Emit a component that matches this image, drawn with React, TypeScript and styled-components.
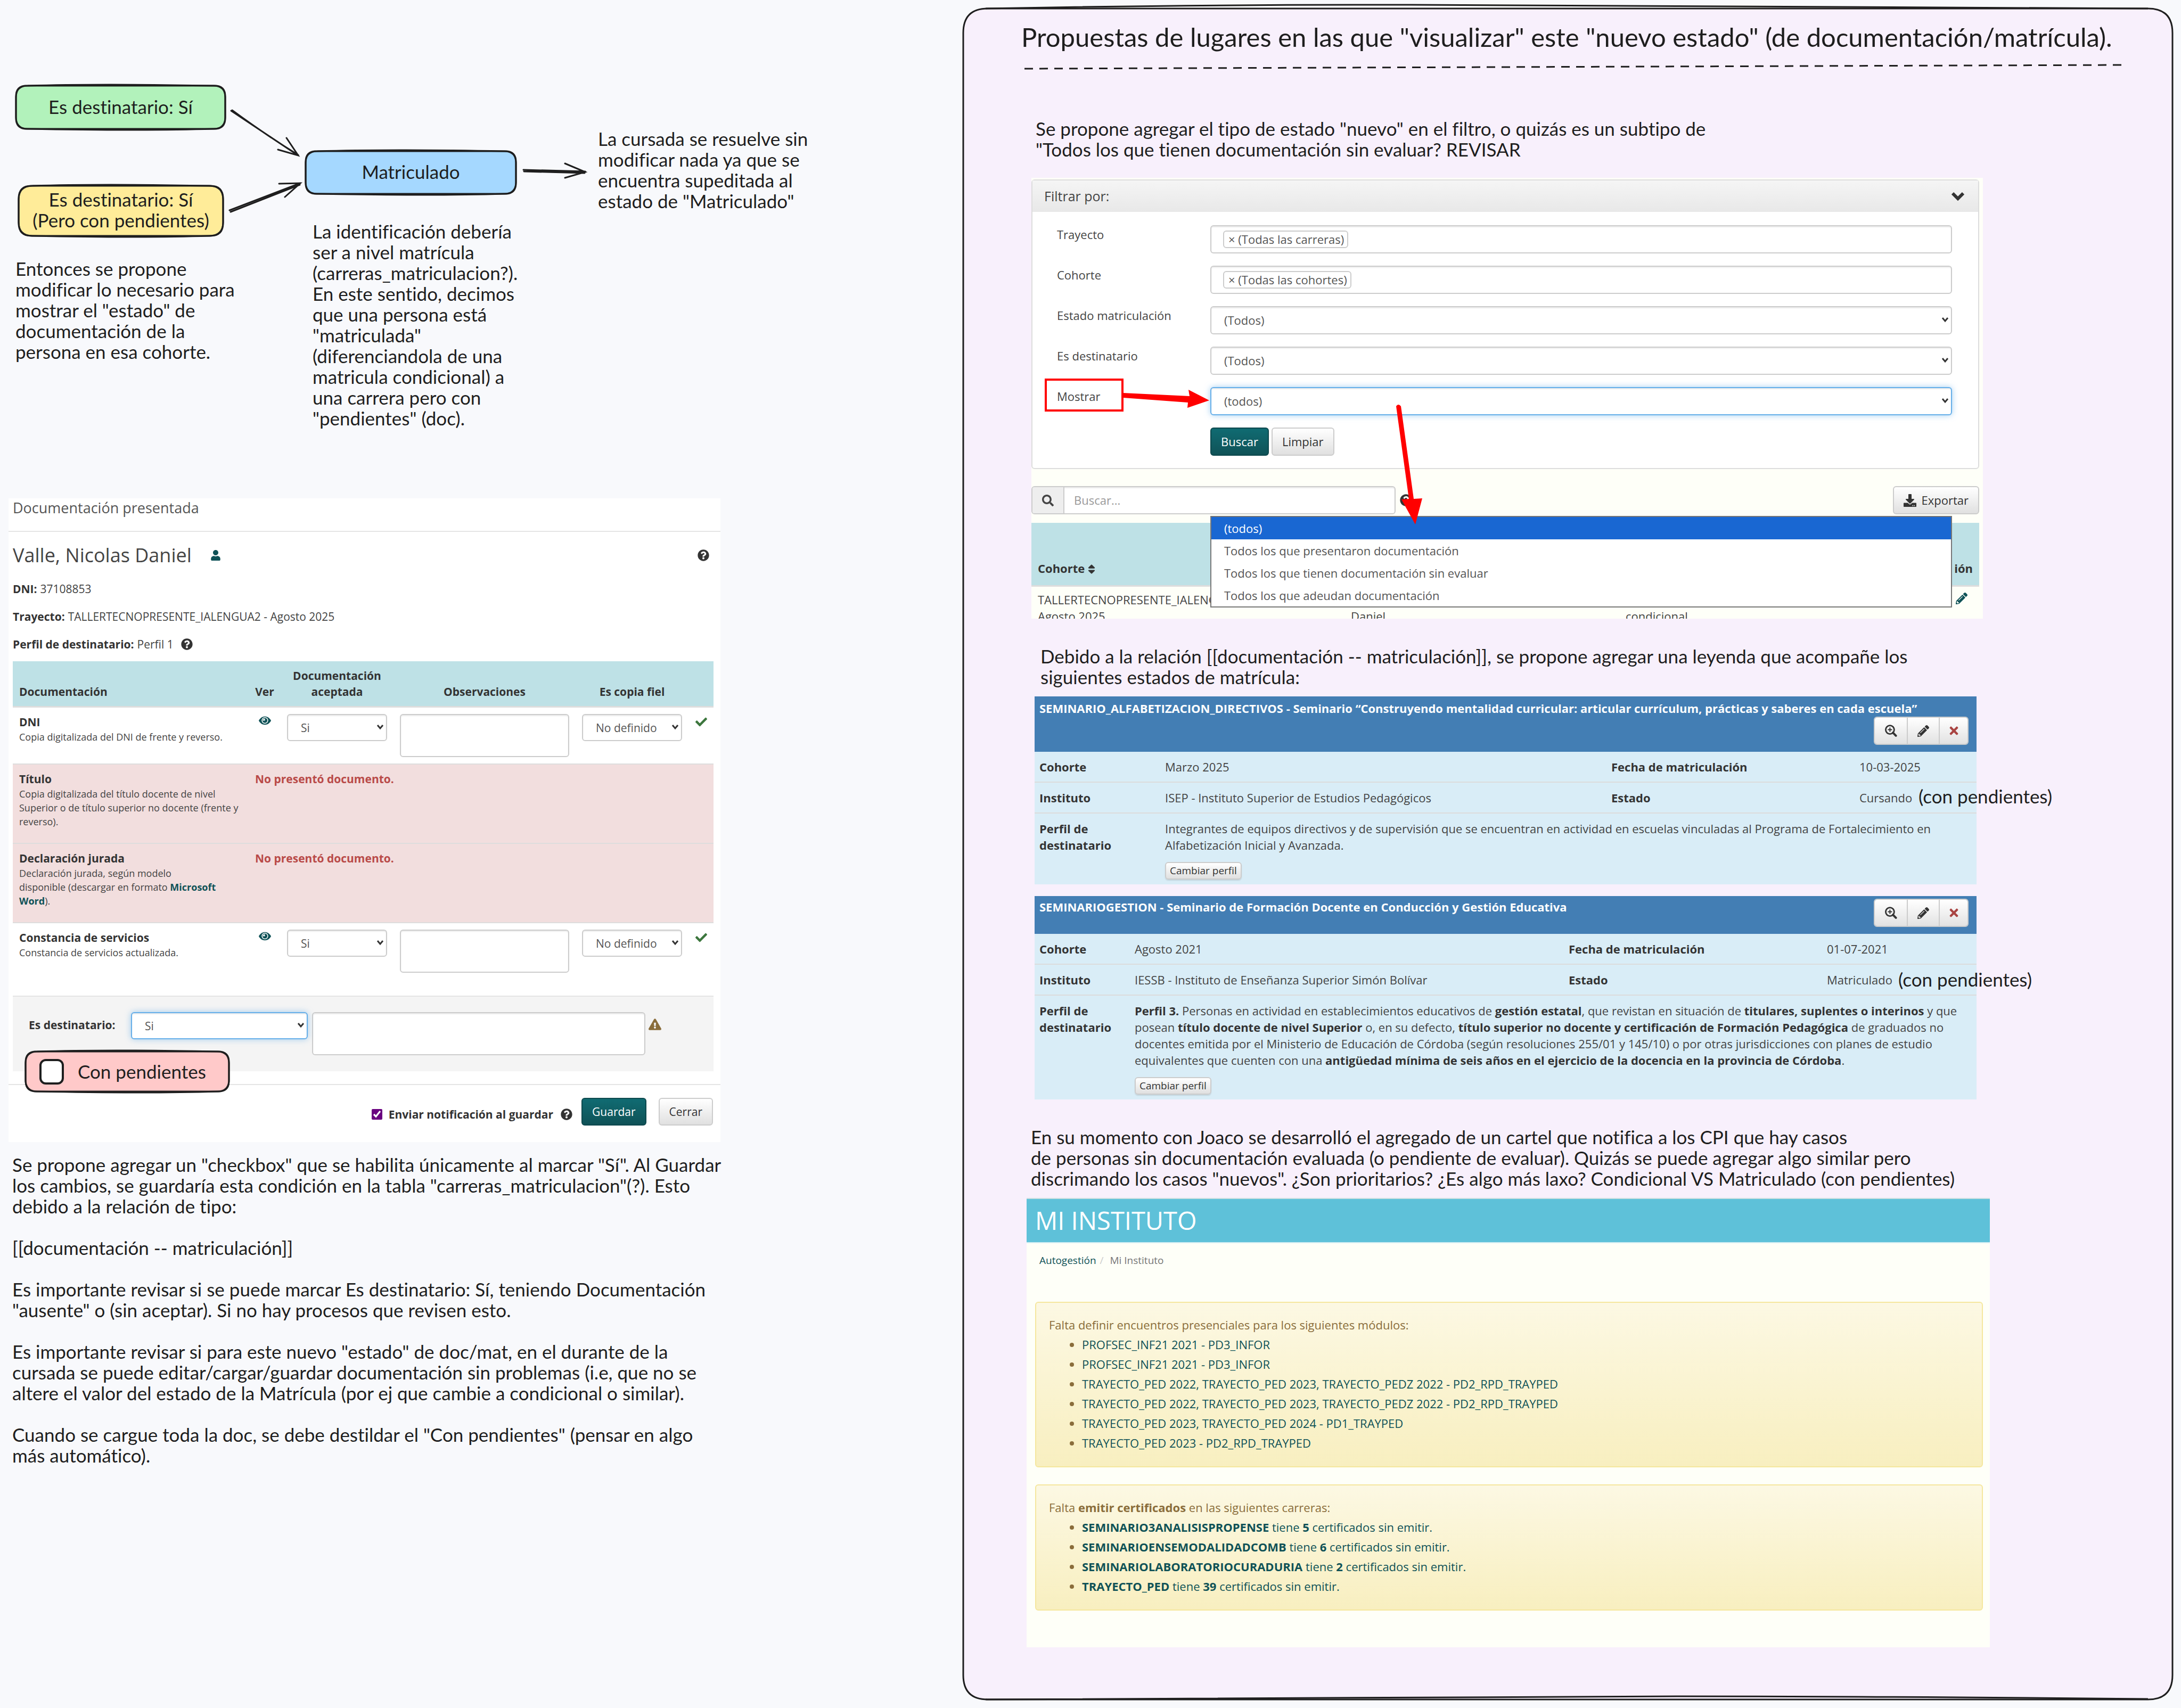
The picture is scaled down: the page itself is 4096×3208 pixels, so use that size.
import React from "react";
import styled, { createGlobalStyle, css } from "styled-components";
import {
  FaCheck,
  FaChevronDown,
  FaDownload,
  FaExclamationTriangle,
  FaPencilAlt,
  FaQuestionCircle,
  FaSearch,
  FaSort,
  FaTimes,
  FaUser,
} from "react-icons/fa";

const ink = "#1e1e1e";
const teal = "#0f5257";
const sans = '"Open Sans", "Noto Sans", sans-serif';
const hand = 'Excalifont, Lato, sans-serif';

const GlobalStyle = createGlobalStyle`
  *, *::before, *::after { box-sizing: border-box; }
  body { margin: 0; background: #f8f9fc; }
  #root { min-height: 100vh; }
  p, h1, h2, h3, ul { margin: 0; padding: 0; font-weight: inherit; font-size: inherit; }
  input, select, textarea, button { font: inherit; color: inherit; margin: 0; }
`;

/* ---------- canvas ---------- */

const Canvas = styled.main`
  position: relative;
  width: 100%;
  min-height: 100vh;
  overflow: hidden;
  font-family: ${sans};
  color: #333;
`;

const Pinned = styled.div<{ $x: number; $y: number; $w?: number }>`
  position: absolute;
  left: ${(p) => p.$x}px;
  top: ${(p) => p.$y}px;
  ${(p) => p.$w && css`width: ${p.$w}px;`}
`;

const Ink = styled.svg`
  position: absolute;
  left: 0;
  top: 0;
  width: 4096px;
  height: 3208px;
  pointer-events: none;
`;

const handwriting = css`
  font-family: ${hand};
  font-size: 35px;
  line-height: 39px;
  font-variant-ligatures: none;
  white-space: pre;
  color: ${ink};
`;

const Note = styled(Pinned).attrs({ as: "p" })`
  ${handwriting}
`;

const BoardTitle = styled(Note).attrs({ as: "h1" })`
  font-size: 49px;
  line-height: 56px;
`;

const NodeLabel = styled(Pinned)<{ $h: number }>`
  display: flex;
  align-items: center;
  justify-content: center;
  height: ${(p) => p.$h}px;
  text-align: center;
  ${handwriting}
`;

const PendingLabel = styled(NodeLabel).attrs({ as: "label" })`
  justify-content: flex-start;
  gap: 26px;
  padding-left: 26px;
`;

const SketchCheck = styled.input`
  appearance: none;
  width: 46px;
  height: 48px;
  border: 4px solid ${ink};
  border-radius: 12px;
  background: #fff;
`;

/* ---------- icons ---------- */

const EyeIcon = () => (
  <svg width="25" height="17" viewBox="0 0 32 22">
    <path d="M1 11C5 4 10 1 16 1s11 3 15 10c-4 7-9 10-15 10S5 18 1 11Z" fill={teal} />
    <circle cx="16" cy="10.500" r="7" fill="none" stroke="#fff" strokeWidth="2" />
    <path d="M16 6v5h-5A5 5 0 0 1 16 6Z" fill="#fff" />
  </svg>
);

const ZoomIcon = () => (
  <svg width="24" height="24" viewBox="0 0 30 30" fill="none" stroke="#333">
    <circle cx="13" cy="12" r="10" strokeWidth="3.500" />
    <path d="M13 7v10M8 12h10" strokeWidth="2.500" />
    <path d="M20 19l7 7" strokeWidth="5" strokeLinecap="round" />
  </svg>
);

/* ---------- shared controls ---------- */

const field = css`
  border: 2px solid #ccc;
  border-radius: 6px;
  background: #fff;
  color: #555;
  box-shadow: inset 0 2px 2px rgba(0, 0, 0, 0.08);
`;

const focused = css`
  border-color: #66afe9;
  box-shadow: inset 0 2px 2px rgba(0, 0, 0, 0.08), 0 0 12px rgba(102, 175, 233, 0.6);
`;

const SelectWrap = styled.span<{ $w?: number; $h: number }>`
  position: relative;
  display: block;
  width: ${(p) => (p.$w ? p.$w + "px" : "100%")};
  height: ${(p) => p.$h}px;
  svg {
    position: absolute;
    right: 6px;
    top: calc(50% - 7px);
    pointer-events: none;
  }
`;

const NativeSelect = styled.select<{ $focus?: boolean }>`
  appearance: none;
  display: block;
  width: 100%;
  height: 100%;
  padding: 0 22px 0 24px;
  ${field}
  ${(p) => p.$focus && focused}
`;

type SelectProps = { value: string; w?: number; h: number; focus?: boolean; id?: string; label?: string };

const Select = ({ value, w, h, focus, id, label }: SelectProps) => (
  <SelectWrap $w={w} $h={h}>
    <NativeSelect id={id} aria-label={label} $focus={focus} defaultValue={value}>
      <option>{value}</option>
    </NativeSelect>
    <svg width="14" height="12" viewBox="0 0 14 12" fill="none" stroke="#333" strokeWidth="3">
      <path d="M2 2l5 6 5-6" />
    </svg>
  </SelectWrap>
);

const TextArea = styled.textarea<{ $w?: number }>`
  display: block;
  width: ${(p) => (p.$w ? p.$w + "px" : "100%")};
  height: 81px;
  resize: none;
  ${field}
`;

const Button = styled.button<{ $primary?: boolean; $h: number }>`
  display: inline-flex;
  align-items: center;
  gap: 10px;
  height: ${(p) => p.$h}px;
  padding: 0 18px;
  border: 2px solid #ccc;
  border-radius: 6px;
  background: linear-gradient(#fff, #e0e0e0);
  color: #333;
  ${(p) =>
    p.$primary &&
    css`
      border-color: #0d484d;
      background: linear-gradient(#106b72, #0f5257);
      color: #fff;
    `}
`;

const SmallButton = styled(Button)`
  padding: 0 7px;
  font-size: 19px;
  box-shadow: 0 2px 2px rgba(0, 0, 0, 0.1);
`;

/* ---------- documentation dialog ---------- */

const Dialog = styled(Pinned).attrs({ as: "section" })`
  background: #fff;
  font-size: 21px;
  line-height: 30px;
`;

const DialogHead = styled.h2`
  height: 63px;
  padding-left: 8px;
  border-bottom: 2px solid #e5e5e5;
  font-size: 27px;
  line-height: 36px;
  color: #555;
`;

const DialogBody = styled.div`
  display: flex;
  flex-direction: column;
  gap: 22px;
  padding: 24px 13px 24px 8px;
`;

const NameRow = styled.div`
  display: flex;
  align-items: center;
  height: 46px;
  gap: 35px;
  padding: 0 8px 6px 0;
  font-size: 36px;
  color: #444;
  svg:last-child { margin-left: auto; }
`;

const Line = styled.p`
  display: flex;
  align-items: center;
  gap: 6px;
  color: #444;
  strong { color: #333; }
  svg { margin-left: 8px; }
`;

const DocTable = styled.table`
  width: 100%;
  margin-top: -5px;
  margin-bottom: 9px;
  border-collapse: separate;
  border-spacing: 0;
  table-layout: fixed;
  th, td { padding: 12px; }
  th {
    vertical-align: bottom;
    background: #bee1e6;
    border-bottom: 3px solid #ddd;
  }
  th:first-child { text-align: left; }
  td { vertical-align: top; }
  tr + tr td { border-top: 2px solid #ddd; }
`;

const MissingRow = styled.tr`
  background: #f2dede;
  td { height: 149px; }
  td:last-child { font-weight: 700; color: #b94a48; }
`;

const DocTitle = styled.strong`
  display: block;
`;

const DocText = styled.span`
  display: block;
  font-size: 18px;
  line-height: 26px;
  white-space: nowrap;
  color: #444;
`;

const Center = styled.span`
  display: flex;
  justify-content: center;
  padding-top: 4px;
`;

const Link = styled.a<{ $bold?: boolean }>`
  color: ${teal};
  text-decoration: none;
  ${(p) => p.$bold && css`font-weight: 700;`}
`;

const Well = styled.div`
  display: flex;
  height: 142px;
  padding: 29px 0 0 30px;
  border-top: 2px solid #e5e5e5;
  background: #f4f4f4;
  gap: 8px;
  > label { width: 184px; padding-top: 9px; font-weight: 700; }
  > svg { margin-top: 11px; margin-left: -2px; }
`;

const DialogFoot = styled.div`
  display: flex;
  align-items: center;
  justify-content: flex-end;
  height: 109px;
  padding: 0 14px 8px 0;
  border-top: 2px solid #e5e5e5;
  label { display: flex; align-items: center; gap: 12px; margin: 10px 14px 0 0; font-weight: 700; }
  label + svg { margin: 10px 17px 0 0; }
  button + button { margin-left: 23px; }
`;

const Tick = styled.input`
  width: 20px;
  height: 20px;
  accent-color: #6a0080;
`;

const DocRow = ({ title, text }: { title: string; text: string }) => (
  <tr>
    <td>
      <DocTitle>{title}</DocTitle>
      <DocText>{text}</DocText>
    </td>
    <td><Center><EyeIcon /></Center></td>
    <td><Select value="Si" h={51} label={`Documentación aceptada: ${title}`} /></td>
    <td><TextArea aria-label={`Observaciones: ${title}`} /></td>
    <td><Select value="No definido" h={51} label={`Es copia fiel: ${title}`} /></td>
    <td><Center><FaCheck size={22} color="#3c763d" /></Center></td>
  </tr>
);

const DocumentationDialog = () => (
  <Dialog $x={16} $y={936} $w={1337}>
    <DialogHead>Documentación presentada</DialogHead>
    <DialogBody>
      <NameRow>
        Valle, Nicolas Daniel
        <FaUser size={20} color={teal} />
        <FaQuestionCircle size={22} color="#333" />
      </NameRow>
      <Line><strong>DNI:</strong> 37108853</Line>
      <Line><strong>Trayecto:</strong> TALLERTECNOPRESENTE_IALENGUA2 - Agosto 2025</Line>
      <Line><strong>Perfil de destinatario:</strong> Perfil 1 <FaQuestionCircle size={22} color="#333" /></Line>
      <DocTable>
        <colgroup>
          <col />
          <col style={{ width: 60 }} />
          <col style={{ width: 212 }} />
          <col style={{ width: 342 }} />
          <col style={{ width: 212 }} />
          <col style={{ width: 47 }} />
        </colgroup>
        <thead>
          <tr>
            <th>Documentación</th>
            <th>Ver</th>
            <th>Documentación aceptada</th>
            <th>Observaciones</th>
            <th>Es copia fiel</th>
            <th />
          </tr>
        </thead>
        <tbody>
          <DocRow title="DNI" text="Copia digitalizada del DNI de frente y reverso." />
          <MissingRow>
            <td>
              <DocTitle>Título</DocTitle>
              <DocText>
                Copia digitalizada del título docente de nivel<br />
                Superior o de título superior no docente (frente y<br />
                reverso).
              </DocText>
            </td>
            <td colSpan={5}>No presentó documento.</td>
          </MissingRow>
          <MissingRow>
            <td>
              <DocTitle>Declaración jurada</DocTitle>
              <DocText>
                Declaración jurada, según modelo<br />
                disponible (descargar en formato <Link $bold href="#">Microsoft<br />
                Word</Link>).
              </DocText>
            </td>
            <td colSpan={5}>No presentó documento.</td>
          </MissingRow>
          <DocRow title="Constancia de servicios" text="Constancia de servicios actualizada." />
        </tbody>
      </DocTable>
      <Well>
        <label htmlFor="destinatario">Es destinatario:</label>
        <Select id="destinatario" value="Si" w={332} h={51} focus />
        <TextArea $w={626} aria-label="Observaciones de destinatario" />
        <FaExclamationTriangle size={24} color="#8a6d3b" />
      </Well>
    </DialogBody>
    <DialogFoot>
      <label><Tick type="checkbox" defaultChecked />Enviar notificación al guardar</label>
      <FaQuestionCircle size={22} color="#333" />
      <Button $primary $h={52}>Guardar</Button>
      <Button $h={52}>Cerrar</Button>
    </DialogFoot>
  </Dialog>
);

/* ---------- filter screen ---------- */

const FilterScreen = styled(Pinned).attrs({ as: "section" })`
  height: 828px;
  overflow: hidden;
  padding: 3px 7px 0 0;
  background: #fefff8;
  font-size: 22px;
  line-height: 31px;
  color: #444;
`;

const FilterCard = styled.div`
  border: 2px solid #ddd;
  border-radius: 6px;
  background: #fff;
  height: 544px;
`;

const FilterHead = styled.h2`
  display: flex;
  align-items: center;
  justify-content: space-between;
  height: 59px;
  padding: 0 26px 0 22px;
  background: linear-gradient(#f5f5f5, #e8e8e8);
  font-size: 25px;
`;

const FilterBody = styled.form`
  display: grid;
  grid-template-columns: 288px 1fr;
  row-gap: 23px;
  padding: 25px 49px 0 46px;
  > label { padding-top: 2px; }
`;

const TagBox = styled.div`
  display: flex;
  align-items: center;
  height: 53px;
  padding-left: 22px;
  ${field}
`;

const Tag = styled.span`
  height: 33px;
  padding: 0 6px 0 8px;
  border: 2px solid #ccc;
  border-radius: 6px;
  line-height: 29px;
  color: #555;
`;

const Actions = styled.div`
  display: flex;
  gap: 5px;
  grid-column: 2;
`;

const Toolbar = styled.div`
  display: flex;
  align-items: center;
  gap: 8px;
  padding: 32px 0 16px;
  button:last-child { margin-left: auto; }
`;

const SearchGroup = styled.label`
  display: flex;
  width: 684px;
  height: 53px;
  overflow: hidden;
  ${field}
  span {
    display: grid;
    place-items: center;
    width: 60px;
    border-right: 2px solid #ccc;
    background: #eee;
  }
  input { flex: 1; padding: 0 18px; border: 0; background: none; outline: 0; }
  input::placeholder { color: #999; opacity: 1; }
`;

const ResultTable = styled.table`
  width: 100%;
  border-spacing: 0;
  table-layout: fixed;
  th, td { padding: 9px 12px; text-align: left; vertical-align: top; white-space: nowrap; }
  th {
    height: 120px;
    padding-bottom: 16px;
    vertical-align: bottom;
    background: #bee1e6;
    border-bottom: 3px solid #ddd;
    color: #333;
  }
  th svg { margin-left: 2px; vertical-align: -4px; }
  th:last-child, td:last-child { text-align: right; }
  td:last-child { padding-right: 22px; }
`;

const OptionList = styled(Pinned).attrs({ as: "ul" })`
  border: 2px solid #777;
  background: #fff;
  list-style: none;
  font-size: 22px;
  line-height: 42px;
  color: #555;
  li { padding-left: 24px; }
  li:first-child { background: #1967d2; color: #fff; }
`;

const FilterView = () => (
  <>
    <FilterScreen $x={1937} $y={334} $w={1787}>
      <FilterCard>
        <FilterHead>
          Filtrar por:
          <svg width="24" height="18" viewBox="0 0 24 18" fill="none" stroke="#333" strokeWidth="6">
            <path d="M2 3l10 10L22 3" />
          </svg>
        </FilterHead>
        <FilterBody>
          <label>Trayecto</label>
          <TagBox><Tag>× (Todas las carreras)</Tag></TagBox>
          <label>Cohorte</label>
          <TagBox><Tag>× (Todas las cohortes)</Tag></TagBox>
          <label htmlFor="estado">Estado matriculación</label>
          <Select id="estado" value="(Todos)" h={53} />
          <label htmlFor="es-destinatario">Es destinatario</label>
          <Select id="es-destinatario" value="(Todos)" h={53} />
          <label htmlFor="mostrar">Mostrar</label>
          <Select id="mostrar" value="(todos)" h={53} focus />
          <Actions>
            <Button type="button" $primary $h={53}>Buscar</Button>
            <Button type="button" $h={53}>Limpiar</Button>
          </Actions>
        </FilterBody>
      </FilterCard>
      <Toolbar>
        <SearchGroup>
          <span><FaSearch size={22} color="#444" /></span>
          <input placeholder="Buscar..." aria-label="Buscar" />
        </SearchGroup>
        <FaQuestionCircle size={23} color="#333" />
        <Button $h={53}><FaDownload size={24} />Exportar</Button>
      </Toolbar>
      <ResultTable>
        <colgroup>
          <col style={{ width: 588 }} />
          <col style={{ width: 516 }} />
          <col />
          <col style={{ width: 120 }} />
        </colgroup>
        <thead>
          <tr><th>Cohorte<FaSort size={22} /></th><th /><th /><th>ión</th></tr>
        </thead>
        <tbody>
          <tr>
            <td>TALLERTECNOPRESENTE_IALENGUA2<br />Agosto 2025</td>
            <td><br />Daniel</td>
            <td><br />condicional</td>
            <td><FaPencilAlt size={22} color={teal} /></td>
          </tr>
        </tbody>
      </ResultTable>
    </FilterScreen>
    <OptionList $x={2273} $y={969} $w={1393}>
      <li>(todos)</li>
      <li>Todos los que presentaron documentación</li>
      <li>Todos los que tienen documentación sin evaluar</li>
      <li>Todos los que adeudan documentación</li>
    </OptionList>
  </>
);

/* ---------- enrolment cards ---------- */

const Enrolment = styled(Pinned).attrs({ as: "section" })`
  background: #d9edf7;
  font-size: 22px;
  line-height: 31px;
  color: #444;
`;

const EnrolHead = styled.header<{ $wrap?: boolean }>`
  display: flex;
  flex-wrap: ${(p) => (p.$wrap ? "wrap" : "nowrap")};
  justify-content: space-between;
  padding: ${(p) => (p.$wrap ? "7px 15px 13px 9px" : "5px 15px 13px 9px")};
  background: #437eb4;
  color: #fff;
  font-weight: 700;
  h3 { ${(p) => p.$wrap && css`width: 100%;`} }
`;

const ButtonGroup = styled.div`
  display: flex;
  margin-left: auto;
  border: 2px solid #ccc;
  border-radius: 6px;
  overflow: hidden;
  button {
    display: grid;
    place-items: center;
    width: 60px;
    height: 49px;
    padding: 0;
    border: 0;
    background: linear-gradient(#fff, #e2e2e2);
    color: #333;
  }
  button + button { border-left: 2px solid #ccc; }
  button:last-child { width: 54px; color: #a94442; }
`;

const EnrolTable = styled.table`
  width: 100%;
  border-spacing: 0;
  table-layout: fixed;
  th, td { padding: 13px 9px 12px; text-align: left; vertical-align: top; }
  th { color: #333; }
  td strong { color: #333; }
  tr + tr th, tr + tr td { border-top: 2px solid #dcdcdc; }
  tr:last-child td { padding-bottom: 9px; }
  ${SmallButton} { display: flex; margin-top: 16px; }
`;

type EnrolProps = {
  y: number;
  wrap?: boolean;
  title: string;
  cols: number[];
  cohorte: string;
  fecha: string;
  instituto: string;
  estado: string;
  children: React.ReactNode;
};

const EnrolmentCard = ({ y, wrap, title, cols, cohorte, fecha, instituto, estado, children }: EnrolProps) => (
  <Enrolment $x={1943} $y={y} $w={1769}>
    <EnrolHead $wrap={wrap}>
      <h3>{title}</h3>
      <ButtonGroup>
        <button aria-label="Ver"><ZoomIcon /></button>
        <button aria-label="Editar"><FaPencilAlt size={22} /></button>
        <button aria-label="Eliminar"><FaTimes size={23} /></button>
      </ButtonGroup>
    </EnrolHead>
    <EnrolTable>
      <colgroup>
        {cols.map((w) => <col key={w} style={{ width: w }} />)}
        <col />
      </colgroup>
      <tbody>
        <tr><th>Cohorte</th><td>{cohorte}</td><th>Fecha de matriculación</th><td>{fecha}</td></tr>
        <tr><th>Instituto</th><td>{instituto}</td><th>Estado</th><td>{estado}</td></tr>
        <tr>
          <th>Perfil de<br />destinatario</th>
          <td colSpan={3}>
            {children}
            <SmallButton $h={33}>Cambiar perfil</SmallButton>
          </td>
        </tr>
      </tbody>
    </EnrolTable>
  </Enrolment>
);

/* ---------- institute screen ---------- */

const Institute = styled(Pinned).attrs({ as: "section" })`
  height: 844px;
  background: #fefff8;
  font-size: 22px;
  line-height: 37px;
`;

const InstituteHead = styled.h2`
  height: 85px;
  padding-left: 16px;
  border-top: 2px solid #ccdfe2;
  border-bottom: 2px solid #d5eef3;
  background: #5ec1d9;
  font-size: 47px;
  line-height: 81px;
  color: #fff;
`;

const Crumbs = styled.nav`
  padding: 14px 0 59px 24px;
  font-size: 19px;
  color: #777;
  i { padding: 0 7px; font-style: normal; color: #ccc; }
`;

const Alert = styled.div`
  margin: 0 13px 32px 16px;
  padding: 23px 24px 25px;
  border: 2px solid #f5e79e;
  border-radius: 6px;
  background: linear-gradient(#fcf8e3, #f8efc0);
  color: #8a6d3b;
  ul { padding-left: 62px; }
`;

const modules = [
  "PROFSEC_INF21 2021 - PD3_INFOR",
  "PROFSEC_INF21 2021 - PD3_INFOR",
  "TRAYECTO_PED 2022, TRAYECTO_PED 2023, TRAYECTO_PEDZ 2022 - PD2_RPD_TRAYPED",
  "TRAYECTO_PED 2022, TRAYECTO_PED 2023, TRAYECTO_PEDZ 2022 - PD2_RPD_TRAYPED",
  "TRAYECTO_PED 2023, TRAYECTO_PED 2024 - PD1_TRAYPED",
  "TRAYECTO_PED 2023 - PD2_RPD_TRAYPED",
];

const certificates: [string, number][] = [
  ["SEMINARIO3ANALISISPROPENSE", 5],
  ["SEMINARIOENSEMODALIDADCOMB", 6],
  ["SEMINARIOLABORATORIOCURADURIA", 2],
  ["TRAYECTO_PED", 39],
];

const InstituteView = () => (
  <Institute $x={1928} $y={2250} $w={1809}>
    <InstituteHead>MI INSTITUTO</InstituteHead>
    <Crumbs><Link href="#">Autogestión</Link><i>/</i> Mi Instituto</Crumbs>
    <Alert>
      <p>Falta definir encuentros presenciales para los siguientes módulos:</p>
      <ul>
        {modules.map((m, i) => <li key={i}><Link href="#">{m}</Link></li>)}
      </ul>
    </Alert>
    <Alert>
      <p>Falta <strong>emitir certificados</strong> en las siguientes carreras:</p>
      <ul>
        {certificates.map(([name, n]) => (
          <li key={name}>
            <Link href="#"><strong>{name}</strong> tiene <strong>{n}</strong> certificados sin emitir.</Link>
          </li>
        ))}
      </ul>
    </Alert>
  </Institute>
);

/* ---------- hand-drawn shapes ---------- */

const roundRect = (x: number, y: number, w: number, h: number, r: number, bulge: number) =>
  `M${x + r} ${y} Q${x + w * 0.4} ${y - bulge} ${x + w - r} ${y} Q${x + w} ${y} ${x + w} ${y + r}` +
  ` L${x + w} ${y + h - r} Q${x + w} ${y + h} ${x + w - r} ${y + h}` +
  ` Q${x + w * 0.6} ${y + h + bulge} ${x + r} ${y + h} Q${x} ${y + h} ${x} ${y + h - r}` +
  ` L${x} ${y + r} Q${x} ${y} ${x + r} ${y}Z`;

type BoxProps = { x: number; y: number; w: number; h: number; fill: string; r?: number };

const SketchBox = ({ x, y, w, h, fill, r = 20 }: BoxProps) => (
  <g stroke={ink} strokeWidth="3" fill="none">
    <path d={roundRect(x, y, w, h, r, 0)} fill={fill} />
    <path d={roundRect(x, y, w, h, r + 2, 4)} />
  </g>
);

export default function App() {
  return (
    <Canvas>
      <GlobalStyle />
      <Ink aria-hidden="true">
        <SketchBox x={30} y={161} w={393} h={81} fill="#b2f2bb" />
        <SketchBox x={35} y={349} w={384} h={94} fill="#ffec99" r={24} />
        <SketchBox x={574} y={284} w={395} h={80} fill="#a5d8ff" />
        <g stroke={ink} strokeWidth="3" fill="none" strokeLinecap="round">
          <path d="M434 208L560 292M436 207Q500 254 560 291M538 259L560 292L522 281" />
          <path d="M431 395L564 344M433 398L563 347M524 345L564 344L535 370" />
          <path d="M983 319L1099 322M984 322L1098 325M1061 307L1099 323L1061 334" />
        </g>
        <g stroke={ink} strokeWidth="3" fill="none">
          <path
            d="M1855 16H4034Q4080 16 4080 62V3146Q4080 3192 4034 3192H1855Q1809 3192 1809 3146V62Q1809 16 1855 16Z"
            fill="#f8f0fc"
          />
          <path d="M1851 16Q2300 8 2650 9Q3300 10 4034 16M4034 3191Q3500 3186 3150 3186Q2700 3188 1851 3192" />
          <path d="M1924 129L3986 122" strokeDasharray="16 12" />
        </g>
      </Ink>

      <NodeLabel $x={30} $y={160} $w={393} $h={80}>Es destinatario: Sí</NodeLabel>
      <NodeLabel $x={35} $y={347} $w={384} $h={94}>{"Es destinatario: Sí\n(Pero con pendientes)"}</NodeLabel>
      <NodeLabel $x={574} $y={282} $w={395} $h={80}>Matriculado</NodeLabel>

      <Note $x={1123} $y={241}>{`La cursada se resuelve sin
modificar nada ya que se
encuentra supeditada al
estado de "Matriculado"`}</Note>
      <Note $x={587} $y={415}>{`La identificación debería
ser a nivel matrícula
(carreras_matriculacion?).
En este sentido, decimos
que una persona está
"matriculada"
(diferenciandola de una
matricula condicional) a
una carrera pero con
"pendientes" (doc).`}</Note>
      <Note $x={29} $y={485}>{`Entonces se propone
modificar lo necesario para
mostrar el "estado" de
documentación de la
persona en esa cohorte.`}</Note>

      <DocumentationDialog />

      <Note $x={23} $y={2168}>{`Se propone agregar un "checkbox" que se habilita únicamente al marcar "Sí". Al Guardar
los cambios, se guardaría esta condición en la tabla "carreras_matriculacion"(?). Esto
debido a la relación de tipo:

[[documentación -- matriculación]]

Es importante revisar si se puede marcar Es destinatario: Sí, teniendo Documentación
"ausente" o (sin aceptar). Si no hay procesos que revisen esto.

Es importante revisar si para este nuevo "estado" de doc/mat, en el durante de la
cursada se puede editar/cargar/guardar documentación sin problemas (i.e, que no se
altere el valor del estado de la Matrícula (por ej que cambie a condicional o similar).

Cuando se cargue toda la doc, se debe destildar el "Con pendientes" (pensar en algo
más automático).`}</Note>

      <BoardTitle $x={1918} $y={41}>
        Propuestas de lugares en las que "visualizar" este "nuevo estado" (de documentación/matrícula).
      </BoardTitle>
      <Note $x={1945} $y={222}>{`Se propone agregar el tipo de estado "nuevo" en el filtro, o quizás es un subtipo de
"Todos los que tienen documentación sin evaluar? REVISAR`}</Note>

      <FilterView />

      <Note $x={1954} $y={1213}>{`Debido a la relación [[documentación -- matriculación]], se propone agregar una leyenda que acompañe los
siguientes estados de matrícula:`}</Note>

      <EnrolmentCard
        y={1308}
        wrap
        title="SEMINARIO_ALFABETIZACION_DIRECTIVOS - Seminario “Construyendo mentalidad curricular: articular currículum, prácticas y saberes en cada escuela”"
        cols={[236, 838, 466]}
        cohorte="Marzo 2025"
        fecha="10-03-2025"
        instituto="ISEP - Instituto Superior de Estudios Pedagógicos"
        estado="Cursando"
      >
        Integrantes de equipos directivos y de supervisión que se encuentran en actividad en escuelas vinculadas al
        Programa de Fortalecimiento en<br />Alfabetización Inicial y Avanzada.
      </EnrolmentCard>
      <Note $x={3603} $y={1476}>(con pendientes)</Note>

      <EnrolmentCard
        y={1683}
        title="SEMINARIOGESTION - Seminario de Formación Docente en Conducción y Gestión Educativa"
        cols={[179, 815, 485]}
        cohorte="Agosto 2021"
        fecha="01-07-2021"
        instituto="IESSB - Instituto de Enseñanza Superior Simón Bolívar"
        estado="Matriculado"
      >
        <strong>Perfil 3.</strong> Personas en actividad en establecimientos educativos de <strong>gestión estatal</strong>, que
        revistan en situación de <strong>titulares, suplentes o interinos</strong> y que<br />
        posean <strong>título docente de nivel Superior</strong> o, en su defecto,{" "}
        <strong>título superior no docente y certificación de Formación Pedagógica</strong> de graduados no<br />
        docentes emitida por el Ministerio de Educación de Córdoba (según resoluciones 255/01 y 145/10) o por otras
        jurisdicciones con planes de estudio<br />
        equivalentes que cuenten con una{" "}
        <strong>antigüedad mínima de seis años en el ejercicio de la docencia en la provincia de Córdoba</strong>.
      </EnrolmentCard>
      <Note $x={3565} $y={1820}>(con pendientes)</Note>

      <Note $x={1936} $y={2116}>{`En su momento con Joaco se desarrolló el agregado de un cartel que notifica a los CPI que hay casos
de personas sin documentación evaluada (o pendiente de evaluar). Quizás se puede agregar algo similar pero
discrimando los casos "nuevos". ¿Son prioritarios? ¿Es algo más laxo? Condicional VS Matriculado (con pendientes)`}</Note>

      <InstituteView />

      <Ink aria-hidden="true">
        <g fill="none" stroke="#ff0000" strokeWidth="4">
          <rect x="1964" y="713" width="144" height="58" />
        </g>
        <g fill="#ff0000">
          <path d="M2109 738L2234 744L2232 732L2271 752L2230 766L2231 756L2109 747Z" />
          <path d="M2622 763Q2626 757 2631 763L2655 937L2671 936L2658 985L2632 938L2646 937Z" />
        </g>
        <SketchBox x={48} y={1975} w={382} h={75} fill="#ffc9c9" />
      </Ink>
      <PendingLabel $x={48} $y={1975} $w={382} $h={75}>
        <SketchCheck type="checkbox" />
        Con pendientes
      </PendingLabel>
    </Canvas>
  );
}
